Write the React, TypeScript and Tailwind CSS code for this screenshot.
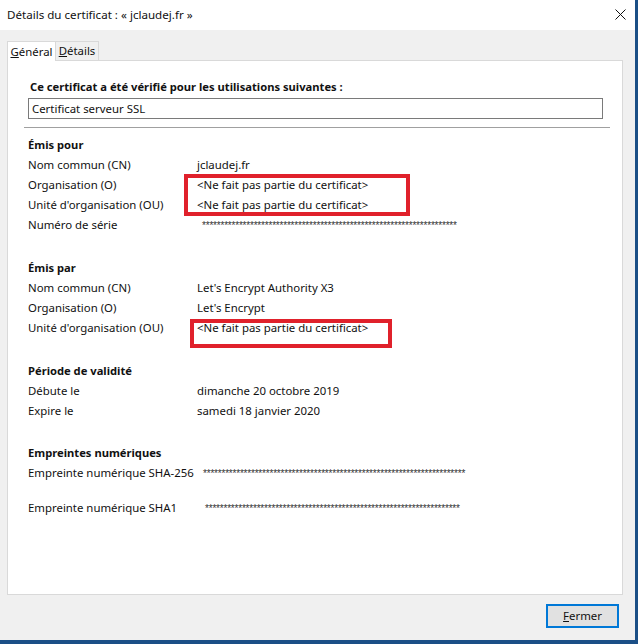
import React from 'react';

const font = { fontFamily: '"Noto Sans", "Liberation Sans", sans-serif' };

function Row({ label, value, valueClass = '' }: { label: string; value: React.ReactNode; valueClass?: string }) {
  return (
    <div className="flex h-[20px] items-center whitespace-nowrap">
      <div className="w-[169px] shrink-0">{label}</div>
      <div className={valueClass}>{value}</div>
    </div>
  );
}

function Stars({ count }: { count: number }) {
  return (
    <span className="text-[10px] leading-none tracking-[-0.2px] text-[#333]" style={{ fontFamily: '"Liberation Sans", sans-serif' }}>
      {'*'.repeat(count)}
    </span>
  );
}

function Heading({ children, className = '' }: { children: React.ReactNode; className?: string }) {
  return <div className={`flex h-[19px] items-center text-[11.2px] font-bold ${className}`}>{children}</div>;
}

export default function App() {
  const absent = '<Ne fait pas partie du certificat>';

  return (
    <div
      className="flex h-[644px] w-[638px] flex-col border-r-[3px] border-b-[4px] border-[#1b4f86] bg-[#f0f0f0] text-[11.4px] text-[#111]"
      style={font}
    >
      {/* title bar */}
      <div className="flex h-[30px] shrink-0 items-center justify-between bg-white pl-[7px] pr-[9px] text-[11.6px]">
        <span>Détails du certificat : « jclaudej.fr »</span>
        <svg width="11" height="11" viewBox="0 0 11 11" className="mb-[2px]">
          <path d="M0.5 0.5 L10.5 10.5 M10.5 0.5 L0.5 10.5" stroke="#111" strokeWidth="1" />
        </svg>
      </div>

      <div className="flex flex-1 flex-col pl-[7px] pr-[12px] pt-[11px]">
        {/* tabs */}
        <div className="flex h-[19px] items-end">
          <div className="relative z-10 -mb-px flex h-[20px] w-[49px] items-center justify-center border border-b-0 border-[#d9d9d9] bg-white">
            <span><span className="underline">G</span>énéral</span>
          </div>
          <div className="flex h-[19px] w-[43px] items-center justify-center border border-b-0 border-l-0 border-[#d9d9d9] bg-[#f0f0f0]">
            <span><span className="underline">D</span>étails</span>
          </div>
        </div>

        {/* panel */}
        <div className="h-[535px] border border-[#d9d9d9] bg-white pl-[20px] pt-[16px]">
          <div className="flex h-[20px] items-center pl-[2px] text-[11.2px] font-bold">
            Ce certificat a été vérifié pour les utilisations suivantes :
          </div>
          <div className="mt-px flex h-[21px] w-[575px] items-center border border-[#7a7a7a] pl-[3px]">
            Certificat serveur SSL
          </div>
          <div className="ml-[-4px] mt-[8px] h-px w-[586px] bg-[#a0a0a0]" />

          <Heading className="mt-[8px]">Émis pour</Heading>
          <div className="relative">
            <Row label="Nom commun (CN)" value="jclaudej.fr" />
            <Row label="Organisation (O)" value={absent} />
            <Row label="Unité d'organisation (OU)" value={absent} />
            <Row label="Numéro de série" value={<Stars count={69} />} valueClass="ml-[5px]" />
            <div className="absolute left-[156px] top-[19px] h-[42px] w-[226px] border-[4px] border-[#e0212b]" />
          </div>

          <Heading className="mt-[24px]">Émis par</Heading>
          <div className="relative">
            <Row label="Nom commun (CN)" value="Let's Encrypt Authority X3" />
            <Row label="Organisation (O)" value="Let's Encrypt" />
            <Row label="Unité d'organisation (OU)" value={absent} />
            <div className="absolute left-[162px] top-[41px] h-[29px] w-[202px] border-[4px] border-[#e0212b]" />
          </div>

          <Heading className="mt-[23px] h-[20px]">Période de validité</Heading>
          <Row label="Débute le" value="dimanche 20 octobre 2019" />
          <Row label="Expire le" value="samedi 18 janvier 2020" />

          <Heading className="mt-[23px]">Empreintes numériques</Heading>
          <Row label="Empreinte numérique SHA-256" value={<Stars count={71} />} valueClass="ml-[6px]" />
          <div className="mt-[15px]">
            <Row label="Empreinte numérique SHA1" value={<Stars count={69} />} valueClass="ml-[8px]" />
          </div>
        </div>

        {/* footer */}
        <div className="flex flex-1 items-start justify-end pr-[4px] pt-[9px]">
          <button className="flex h-[24px] w-[73px] items-center justify-center border-2 border-[#0078d7] bg-[#e1e1e1]">
            <span><span className="underline">F</span>ermer</span>
          </button>
        </div>
      </div>
    </div>
  );
}
